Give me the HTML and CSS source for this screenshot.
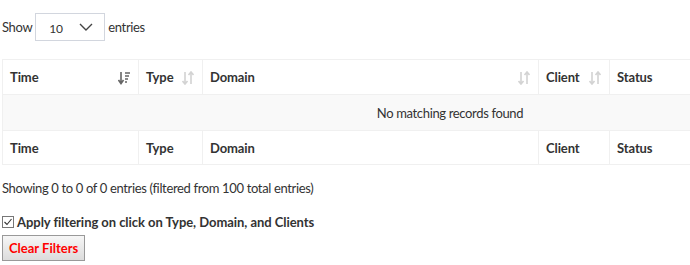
FILE: index.html
```html
<!DOCTYPE html>
<html lang="en">
<head>
    <meta charset="UTF-8">
    <title>Query Log</title>
    <link rel="stylesheet" href="styles.css">
</head>
<body>
    <div class="length-bar">
        <label>Show
            <span class="select-box">
                <span class="select-value">10</span>
                <svg class="chevron" width="14" height="8" viewBox="0 0 14 8"><path d="M1 1 L7 7 L13 1" fill="none" stroke="#444" stroke-width="1.4"/></svg>
            </span>
            entries</label>
    </div>

    <table class="log-table">
        <thead>
            <tr>
                <th class="col-time sorting">Time
                    <svg class="sort-icon active" width="12" height="14" viewBox="0 0 12 14"><path d="M3 1 V12 M0.5 9 L3 12.5 L5.5 9" fill="none" stroke="#666" stroke-width="1.6"/><path d="M7 2 H12 M7 5 H11 M7 8 H10 M7 11 H9" stroke="#666" stroke-width="1.4"/></svg>
                </th>
                <th class="col-type sorting">Type
                    <svg class="sort-icon" width="12" height="14" viewBox="0 0 12 14"><path d="M3 1 V13 M0.5 10 L3 13 L5.5 10 M9 1 V13 M6.5 4 L9 1 L11.5 4" fill="none" stroke="#d3d3d3" stroke-width="1.6"/></svg>
                </th>
                <th class="col-domain sorting">Domain
                    <svg class="sort-icon" width="12" height="14" viewBox="0 0 12 14"><path d="M3 1 V13 M0.5 10 L3 13 L5.5 10 M9 1 V13 M6.5 4 L9 1 L11.5 4" fill="none" stroke="#d3d3d3" stroke-width="1.6"/></svg>
                </th>
                <th class="col-client sorting">Client
                    <svg class="sort-icon" width="12" height="14" viewBox="0 0 12 14"><path d="M3 1 V13 M0.5 10 L3 13 L5.5 10 M9 1 V13 M6.5 4 L9 1 L11.5 4" fill="none" stroke="#d3d3d3" stroke-width="1.6"/></svg>
                </th>
                <th class="col-status">Status</th>
            </tr>
        </thead>
        <tbody>
            <tr class="empty-row">
                <td colspan="5">No matching records found</td>
            </tr>
        </tbody>
        <tfoot>
            <tr>
                <th>Time</th>
                <th>Type</th>
                <th>Domain</th>
                <th>Client</th>
                <th>Status</th>
            </tr>
        </tfoot>
    </table>

    <div class="table-info">Showing 0 to 0 of 0 entries (filtered from 100 total entries)</div>

    <div class="filter-option">
        <label>
            <svg class="check" width="12" height="12" viewBox="0 0 12 12"><rect x="0.5" y="0.5" width="11" height="11" fill="#fff" stroke="#777"/><path d="M2.5 6 L5 8.5 L9.5 3" fill="none" stroke="#333" stroke-width="1.1"/></svg>
            Apply filtering on click on Type, Domain, and Clients</label>
    </div>
    <button type="button" class="clear-btn">Clear Filters</button>
</body>
</html>
```

FILE: styles.css
```css
* {
    box-sizing: border-box;
}

body {
    margin: 0;
    padding: 13px 0 0 2px;
    font-family: Lato, "Open Sans", sans-serif;
    font-size: 13px;
    letter-spacing: -0.35px;
    color: #333;
    background: #fff;
    overflow: hidden;
    width: 690px;
}

.length-bar label {
    display: flex;
    align-items: center;
    gap: 3px;
}

.select-box {
    display: inline-flex;
    align-items: center;
    justify-content: space-between;
    width: 70px;
    height: 28px;
    padding: 0 11px 0 13px;
    border: 1px solid #d2d6de;
    font-size: 12px;
}

.select-value {
    padding-top: 2px;
}

.log-table {
    margin-top: 18px;
    width: 896px;
    border-collapse: collapse;
    table-layout: fixed;
}

.log-table th,
.log-table td {
    border: 1px solid #f0f0f0;
    text-align: left;
    font-weight: bold;
    letter-spacing: -0.1px;
    height: 35px;
    padding: 0 7px;
    position: relative;
}

.log-table tbody td {
    height: 36px;
    letter-spacing: -0.35px;
}

.log-table tfoot th {
    height: 34px;
}

.col-time { width: 136px; }
.col-type { width: 64px; }
.col-domain { width: 336px; }
.col-client { width: 71px; }

.sort-icon {
    position: absolute;
    right: 8px;
    top: 11px;
}

.empty-row td {
    background: #f9f9f9;
    text-align: center;
    font-weight: normal;
}

.table-info {
    margin-top: 15px;
}

.filter-option {
    margin-top: 18px;
    font-weight: bold;
    letter-spacing: -0.05px;
}

.filter-option label {
    display: flex;
    align-items: center;
    gap: 3px;
}

.clear-btn {
    margin-top: 5px;
    height: 26px;
    padding: 0 6px;
    font-family: inherit;
    font-size: 13px;
    letter-spacing: 0;
    font-weight: bold;
    color: #f00;
    border: 1px solid #999;
    border-radius: 0;
    background: linear-gradient(#f6f6f6, #dcdcdc);
}
```
